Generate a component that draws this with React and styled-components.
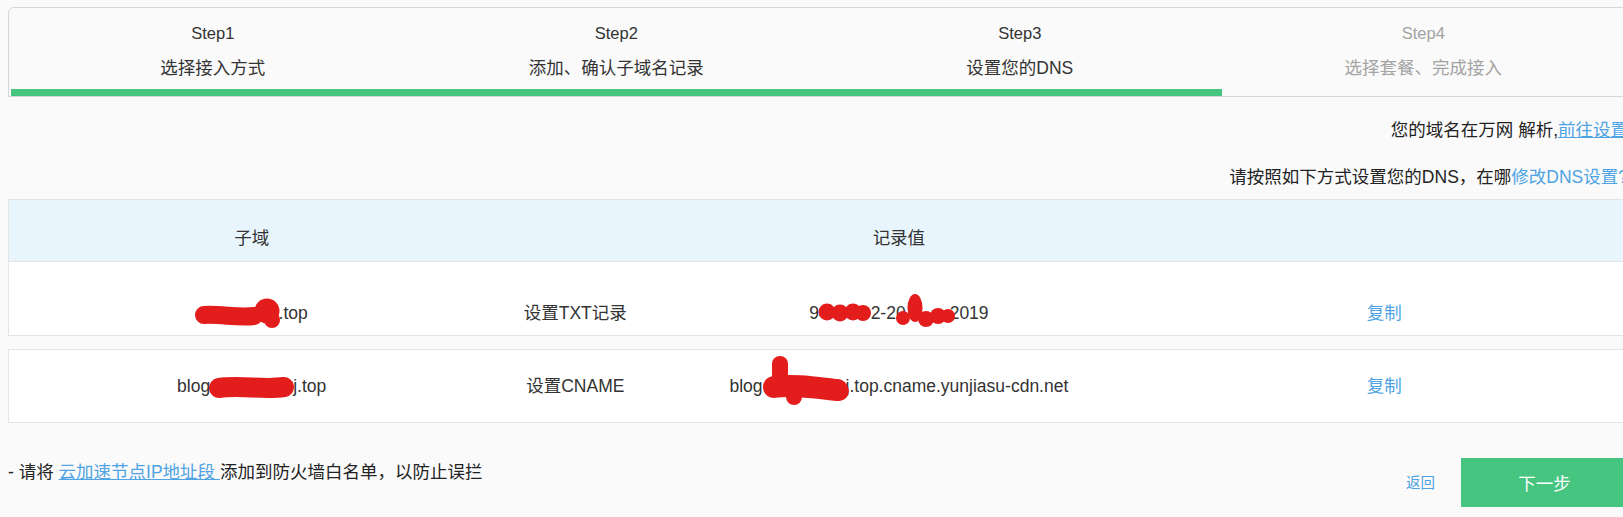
import React from "react";
import styled, { createGlobalStyle } from "styled-components";

const GREEN = "#45c580";
const BLUE = "#4fa3e3";
const RED = "#e31c1c";

const GlobalStyle = createGlobalStyle`
  html, body {
    margin: 0;
    padding: 0;
    overflow: hidden;
    background: #fafafa;
  }
  body {
    font-family: "Liberation Sans", Arial, "Noto Sans CJK SC", sans-serif;
    color: #333;
  }
`;

const steps = [
  { label: "Step1", title: "选择接入方式", done: true },
  { label: "Step2", title: "添加、确认子域名记录", done: true },
  { label: "Step3", title: "设置您的DNS", done: true },
  { label: "Step4", title: "选择套餐、完成接入", done: false },
];

// redaction marks: drawn around y=11 (text middle), the box is kept short so the line does not grow
const Mark = ({ w, ml, mr, children }) => (
  <Scribble width={w} height="16" viewBox={`0 3 ${w} 16`} $ml={ml} $mr={mr}>
    {children}
  </Scribble>
);

const App = () => {
  return (
    <>
      <GlobalStyle />
      <Page>
        <StepsPanel>
          {steps.map((s) => (
            <Step key={s.label} $done={s.done}>
              <StepLabel>{s.label}</StepLabel>
              <StepTitle>{s.title}</StepTitle>
              <StepBar $done={s.done} />
            </Step>
          ))}
        </StepsPanel>

        <Notice $top={22}>
          您的域名在万网 解析,<Link $underline>前往设置</Link>
        </Notice>
        <Notice $top={25}>
          请按照如下方式设置您的DNS，在哪<Link>修改DNS设置?</Link>
        </Notice>

        <TableBox $top={11}>
          <HeadRow>
            <Cell>子域</Cell>
            <Cell />
            <Cell>记录值</Cell>
            <Cell />
          </HeadRow>
          <Row $pt={40} $pb={11}>
            <Cell>
              <Mark w={87} mr={-4}>
                <path d="M8 12 C 25 11, 42 15, 58 13" stroke={RED} strokeWidth="18" strokeLinecap="round" fill="none" />
                <circle cx="71" cy="8" r="12.5" fill={RED} />
                <circle cx="76" cy="17" r="8" fill={RED} />
              </Mark>
              .top
            </Cell>
            <Cell>设置TXT记录</Cell>
            <Cell>
              94
              <Mark w={52} ml={-10}>
                <circle cx="8" cy="9" r="8.5" fill={RED} />
                <circle cx="21" cy="10" r="8.5" fill={RED} />
                <circle cx="34" cy="9" r="8.5" fill={RED} />
                <circle cx="44" cy="10" r="8" fill={RED} />
              </Mark>
              2-20
              <Mark w={60} ml={-10} mr={-6}>
                <circle cx="7" cy="15" r="7" fill={RED} />
                <ellipse cx="19" cy="5" rx="7.5" ry="14" fill={RED} />
                <circle cx="30" cy="16" r="8" fill={RED} />
                <circle cx="42" cy="13" r="8" fill={RED} />
                <circle cx="52" cy="13" r="7" fill={RED} />
              </Mark>
              2019
            </Cell>
            <Cell>
              <Link>复制</Link>
            </Cell>
          </Row>
        </TableBox>

        <TableBox $top={13}>
          <Row $pt={25} $pb={25}>
            <Cell>
              blog
              <Mark w={83}>
                <path d="M9 12 C 30 9, 55 14, 74 11" stroke={RED} strokeWidth="20" strokeLinecap="round" fill="none" />
              </Mark>
              j.top
            </Cell>
            <Cell>设置CNAME</Cell>
            <Cell>
              blog
              <Mark w={87} mr={-4}>
                <path d="M17 -12 L 17 2" stroke={RED} strokeWidth="16" strokeLinecap="round" fill="none" />
                <path d="M11 11 C 30 8, 55 12, 74 14" stroke={RED} strokeWidth="22" strokeLinecap="round" fill="none" />
                <circle cx="31" cy="21" r="8" fill={RED} />
                <circle cx="76" cy="15" r="10" fill={RED} />
              </Mark>
              j.top.cname.yunjiasu-cdn.net
            </Cell>
            <Cell>
              <Link>复制</Link>
            </Cell>
          </Row>
        </TableBox>

        <Footer>
          <Note>
            - 请将 <Link $underline>云加速节点IP地址段 </Link>添加到防火墙白名单，以防止误拦
          </Note>
          <Actions>
            <Back>返回</Back>
            <NextButton>下一步</NextButton>
          </Actions>
        </Footer>
      </Page>
    </>
  );
};

const Page = styled.div`
  width: 1620px;
  margin-left: 8px;
  padding-top: 7px;
  font-size: 17.5px;
  line-height: 22px;
`;

const StepsPanel = styled.div`
  display: grid;
  grid-template-columns: repeat(4, 1fr);
  padding: 0 2px;
  border: 1px solid #d3d6da;
  border-radius: 6px 6px 0 0;
  background: #fafafa;
`;

const Step = styled.div`
  display: flex;
  flex-direction: column;
  align-items: center;
  color: ${(p) => (p.$done ? "#333" : "#a3a3a3")};
`;

const StepLabel = styled.div`
  margin-top: 14px;
  font-size: 16.5px;
`;

const StepTitle = styled.div`
  margin-top: 13px;
`;

const StepBar = styled.div`
  align-self: stretch;
  margin-top: 10px;
  height: 7px;
  background: ${(p) => (p.$done ? GREEN : "transparent")};
`;

const Notice = styled.div`
  margin-top: ${(p) => p.$top}px;
  text-align: right;
  white-space: nowrap;
  color: #222;
`;

const Link = styled.a`
  color: ${BLUE};
  cursor: pointer;
  text-decoration: ${(p) => (p.$underline ? "underline" : "none")};
`;

const TableBox = styled.div`
  margin-top: ${(p) => p.$top}px;
  border: 1px solid #e4e4e4;
  background: #fff;
`;

const Columns = styled.div`
  display: grid;
  grid-template-columns: 30% 10% 30% 30%;
  text-align: center;
`;

const HeadRow = styled(Columns)`
  padding: 27px 0 12px;
  background: #e9f5fd;
  border-bottom: 1px solid #e4e4e4;
`;

const Row = styled(Columns)`
  padding: ${(p) => p.$pt}px 0 ${(p) => p.$pb}px;
`;

const Cell = styled.div`
  white-space: nowrap;
`;

const Scribble = styled.svg`
  display: inline-block;
  vertical-align: middle;
  overflow: visible;
  position: relative;
  z-index: 1;
  margin-left: ${(p) => p.$ml || 0}px;
  margin-right: ${(p) => p.$mr || 0}px;
`;

const Footer = styled.div`
  display: flex;
  justify-content: space-between;
  align-items: flex-start;
  margin-top: 35px;
`;

const Note = styled.div`
  margin-top: 3px;
  color: #222;
`;

const Actions = styled.div`
  display: flex;
  align-items: center;
  gap: 26px;
`;

const Back = styled.a`
  font-size: 14.5px;
  color: ${BLUE};
  cursor: pointer;
`;

const NextButton = styled.button`
  width: 167px;
  height: 49px;
  border: none;
  background: ${GREEN};
  color: #fff;
  font-family: inherit;
  font-size: 17.5px;
  cursor: pointer;
`;

export default App;
